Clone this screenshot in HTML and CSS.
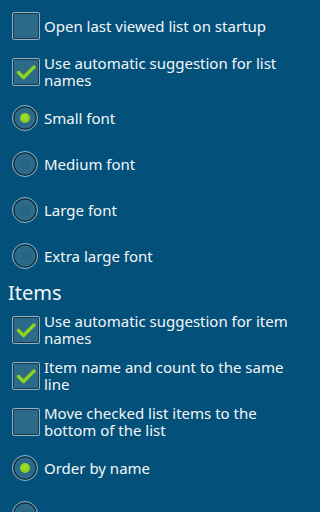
FILE: index.html
```html
<!DOCTYPE html>
<html>
<head>
<meta charset="utf-8">
<link rel="stylesheet" href="styles.css">
</head>
<body>
<div class="prefs">
  <div class="row"><span class="check"></span><span class="label">Open last viewed list on startup</span></div>
  <div class="row"><span class="check on"><svg viewBox="0 0 28 28"><path d="M6.5 14.5 L11.5 19.5 L22 9" /></svg></span><span class="label">Use automatic suggestion for list names</span></div>
  <div class="row"><span class="radio on"></span><span class="label">Small font</span></div>
  <div class="row"><span class="radio"></span><span class="label">Medium font</span></div>
  <div class="row"><span class="radio"></span><span class="label">Large font</span></div>
  <div class="row"><span class="radio"></span><span class="label">Extra large font</span></div>
  <div class="header">Items</div>
  <div class="row"><span class="check on"><svg viewBox="0 0 28 28"><path d="M6.5 14.5 L11.5 19.5 L22 9" /></svg></span><span class="label">Use automatic suggestion for item names</span></div>
  <div class="row"><span class="check on"><svg viewBox="0 0 28 28"><path d="M6.5 14.5 L11.5 19.5 L22 9" /></svg></span><span class="label">Item name and count to the same line</span></div>
  <div class="row"><span class="check"></span><span class="label">Move checked list items to the bottom of the list</span></div>
  <div class="row"><span class="radio on"></span><span class="label">Order by name</span></div>
  <div class="row"><span class="radio"></span><span class="label"></span></div>
</div>
</body>
</html>
```
FILE: styles.css
```css
html, body {
  margin: 0;
  padding: 0;
  background: #03517a;
  height: 100%;
  overflow: hidden;
}
.prefs {
  padding-top: 3px;
  font-family: "Noto Sans", "Open Sans", "DejaVu Sans", sans-serif;
  color: #f3f6f8;
}
.row {
  display: flex;
  align-items: center;
  height: 46px;
  padding: 0 12px;
  gap: 4px;
}
.label {
  font-size: 15px;
  line-height: 17px;
}
.header {
  height: 28px;
  padding-left: 8px;
  font-size: 20px;
  line-height: 28px;
}
.check {
  flex: none;
  width: 28px;
  height: 28px;
  box-sizing: border-box;
  border: 1px solid #8eb3c6;
  box-shadow: inset 0 0 0 1px #1b3b4d;
  background: #2c6a8a;
  border-radius: 2px;
  display: flex;
}
.check svg {
  width: 28px;
  height: 28px;
  margin: -1px;
}
.check path {
  fill: none;
  stroke: #8ed31c;
  stroke-width: 3.4;
  stroke-linecap: round;
  stroke-linejoin: round;
}
.radio {
  flex: none;
  width: 26px;
  height: 26px;
  margin-right: 2px;
  box-sizing: border-box;
  border-radius: 50%;
  border: 1px solid #8eb3c6;
  box-shadow: inset 0 0 0 1.5px #14303f;
  background: #2c6a8a;
  display: flex;
  align-items: center;
  justify-content: center;
}
.radio::after {
  content: "";
  width: 9px;
  height: 9px;
  border-radius: 50%;
  background: #2a6584;
  box-shadow: 0 0 1px #245a76;
}
.radio.on::after {
  width: 10px;
  height: 10px;
  background: radial-gradient(circle at 45% 40%, #a4e22c, #7fc416);
  box-shadow: none;
}
```
